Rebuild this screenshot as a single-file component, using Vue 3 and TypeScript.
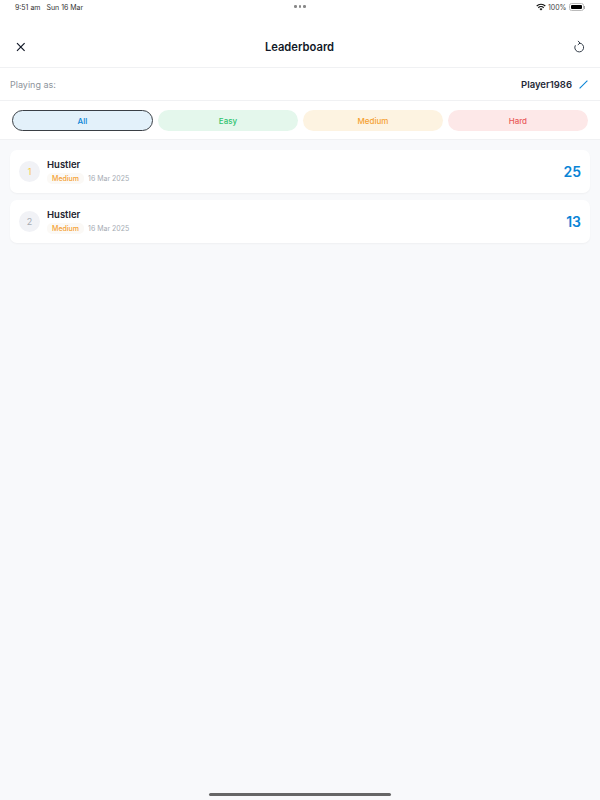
<script setup lang="ts">
interface Score {
  rank: number
  name: string
  level: string
  date: string
  score: number
  rankClass: string
}

const filters = [
  { label: 'All', cls: 'all' },
  { label: 'Easy', cls: 'easy' },
  { label: 'Medium', cls: 'medium' },
  { label: 'Hard', cls: 'hard' },
]

const scores: Score[] = [
  { rank: 1, name: 'Hustler', level: 'Medium', date: '16 Mar 2025', score: 25, rankClass: 'gold' },
  { rank: 2, name: 'Hustler', level: 'Medium', date: '16 Mar 2025', score: 13, rankClass: 'silver' },
]
</script>

<template>
  <div class="screen">
    <div class="status-bar">
      <span class="time">9:51 am&nbsp;&nbsp;&nbsp;Sun 16 Mar</span>
      <div class="dots"><i></i><i></i><i></i></div>
      <div class="status-right">
        <svg class="wifi" width="10" height="8" viewBox="0 0 10 8">
          <path d="M0.3 2.6a6.6 6.6 0 0 1 9.4 0l-.8.9a5.4 5.4 0 0 0-7.8 0z" fill="#111" />
          <path d="M1.9 4.3a4.4 4.4 0 0 1 6.2 0l-.8.9a3.2 3.2 0 0 0-4.6 0z" fill="#111" />
          <path d="M3.5 5.9a2.1 2.1 0 0 1 3 0L5 7.6z" fill="#111" />
        </svg>
        <span class="battery-text">100%</span>
        <div class="battery"><div class="battery-fill"></div></div>
        <div class="battery-cap"></div>
      </div>
    </div>

    <header class="header">
      <svg class="close" width="12" height="12" viewBox="0 0 12 12">
        <path d="M2 2.2l7.6 7.6M9.6 2.2l-7.6 7.6" stroke="#111827" stroke-width="1.2" fill="none" />
      </svg>
      <h1 class="title">Leaderboard</h1>
      <svg class="refresh" width="14" height="14" viewBox="0 0 14 14">
        <path d="M7.4 3.1a4.4 4.4 0 1 1-4 2.2" stroke="#1f2937" stroke-width="0.9" fill="none" />
        <path d="M6 0.9l2 2.2-2.2 1.8" stroke="#1f2937" stroke-width="0.9" fill="none" />
      </svg>
    </header>

    <div class="player-row">
      <span class="player-label">Playing as:</span>
      <div class="player-right">
        <span class="player-name">Player1986</span>
        <svg width="9" height="9" viewBox="0 0 9 9">
          <path d="M0.6 8.4L8.4 0.6" stroke="#0a84d6" stroke-width="1.1" fill="none" />
        </svg>
      </div>
    </div>

    <div class="filters">
      <button v-for="f in filters" :key="f.label" class="filter" :class="f.cls">{{ f.label }}</button>
    </div>

    <div class="list">
      <div v-for="s in scores" :key="s.rank" class="card">
        <div class="rank" :class="s.rankClass">{{ s.rank }}</div>
        <div class="info">
          <div class="name">{{ s.name }}</div>
          <div class="meta">
            <span class="level">{{ s.level }}</span>
            <span class="date">{{ s.date }}</span>
          </div>
        </div>
        <div class="score">{{ s.score }}</div>
      </div>
    </div>

    <div class="home-bar"></div>
  </div>
</template>

<style>
html,
body {
  margin: 0;
  background: #f8f9fb;
}
</style>

<style scoped>
.screen {
  width: 600px;
  height: 800px;
  background: #f8f9fb;
  font-family: Inter, "Liberation Sans", sans-serif;
  display: flex;
  flex-direction: column;
  overflow: hidden;
  position: relative;
}

.status-bar {
  height: 14px;
  background: #fff;
  display: flex;
  align-items: center;
  justify-content: space-between;
  padding: 0 15px;
  position: relative;
}

.time {
  font-size: 7px;
  color: #333;
}

.dots {
  position: absolute;
  left: 294px;
  top: 5px;
  display: flex;
  gap: 2px;
}

.dots i {
  width: 2.5px;
  height: 2.5px;
  border-radius: 50%;
  background: #888;
}

.status-right {
  display: flex;
  align-items: center;
}

.battery-text {
  font-size: 7px;
  color: #444;
  margin-left: 2px;
  margin-right: 2px;
}

.battery {
  width: 15px;
  height: 8px;
  border: 1px solid #bbb;
  border-radius: 2.5px;
  padding: 1px;
  box-sizing: border-box;
}

.battery-fill {
  width: 100%;
  height: 100%;
  background: #000;
  border-radius: 1px;
}

.battery-cap {
  width: 1px;
  height: 3px;
  background: #aaa;
  margin-left: 0.5px;
}

.header {
  height: 53px;
  background: #fff;
  display: flex;
  align-items: center;
  justify-content: space-between;
  padding: 0 15px;
  border-bottom: 1px solid #f0f1f3;
}

.title {
  margin: 12px 0 0;
  font-size: 11.2px;
  font-weight: 600;
  color: #111827;
}

.close {
  margin-top: 12px;
}

.refresh {
  margin-top: 12px;
  margin-right: -1px;
}

.player-row {
  height: 32px;
  background: #fff;
  display: flex;
  align-items: center;
  justify-content: space-between;
  padding: 0 12px 0 10px;
  border-bottom: 1px solid #f0f1f3;
}

.player-label {
  font-size: 9px;
  color: #8e949c;
}

.player-right {
  display: flex;
  align-items: center;
  gap: 7px;
}

.player-name {
  font-size: 9.5px;
  font-weight: 600;
  color: #1f2937;
}

.filters {
  height: 39px;
  background: #fff;
  box-sizing: border-box;
  display: grid;
  grid-template-columns: 141.5px repeat(3, 1fr);
  gap: 4.7px;
  padding: 9px 12px 9px 11.7px;
  border-bottom: 1px solid #f0f1f3;
}

.filter {
  font-family: inherit;
  font-size: 8px;
  font-weight: 500;
  border: none;
  border-radius: 11px;
  padding: 0;
  height: 21px;
}

.filter.all {
  background: #e3f1fa;
  color: #0a84d6;
  border: 1px solid #3a3f45;
}

.filter.easy {
  background: #e4f7ec;
  color: #2fc46f;
}

.filter.medium {
  background: #fdf3e1;
  color: #f5a030;
}

.filter.hard {
  background: #fde8e8;
  color: #ea5a5a;
}

.list {
  padding: 10px 10px 0;
  display: flex;
  flex-direction: column;
  gap: 7px;
}

.card {
  height: 43px;
  background: #fff;
  border-radius: 7px;
  box-shadow: 0 1px 2px rgba(0, 0, 0, 0.04);
  display: flex;
  align-items: center;
  padding: 0 9px;
}

.rank {
  width: 21px;
  height: 21px;
  border-radius: 50%;
  background: #f1f2f6;
  display: flex;
  align-items: center;
  justify-content: center;
  font-size: 9px;
  font-weight: 400;
}

.rank.gold {
  color: #f7c948;
}

.rank.silver {
  color: #a6abb3;
}

.info {
  flex: 1;
  margin-left: 7px;
}

.name {
  font-size: 9.5px;
  font-weight: 600;
  color: #1f2430;
  line-height: 12px;
}

.meta {
  display: flex;
  align-items: center;
  margin-top: 2px;
}

.level {
  font-size: 7px;
  font-weight: 500;
  color: #f5a030;
  background: #fbf9f6;
  border-radius: 5px;
  padding: 1px 5px;
  line-height: 9px;
}

.date {
  font-size: 7px;
  color: #a6abb3;
  margin-left: 4px;
}

.score {
  font-size: 14px;
  font-weight: 600;
  color: #0a84d6;
}

.home-bar {
  position: absolute;
  left: 209px;
  bottom: 4px;
  width: 182px;
  height: 3px;
  border-radius: 2px;
  background: #666;
}
</style>
